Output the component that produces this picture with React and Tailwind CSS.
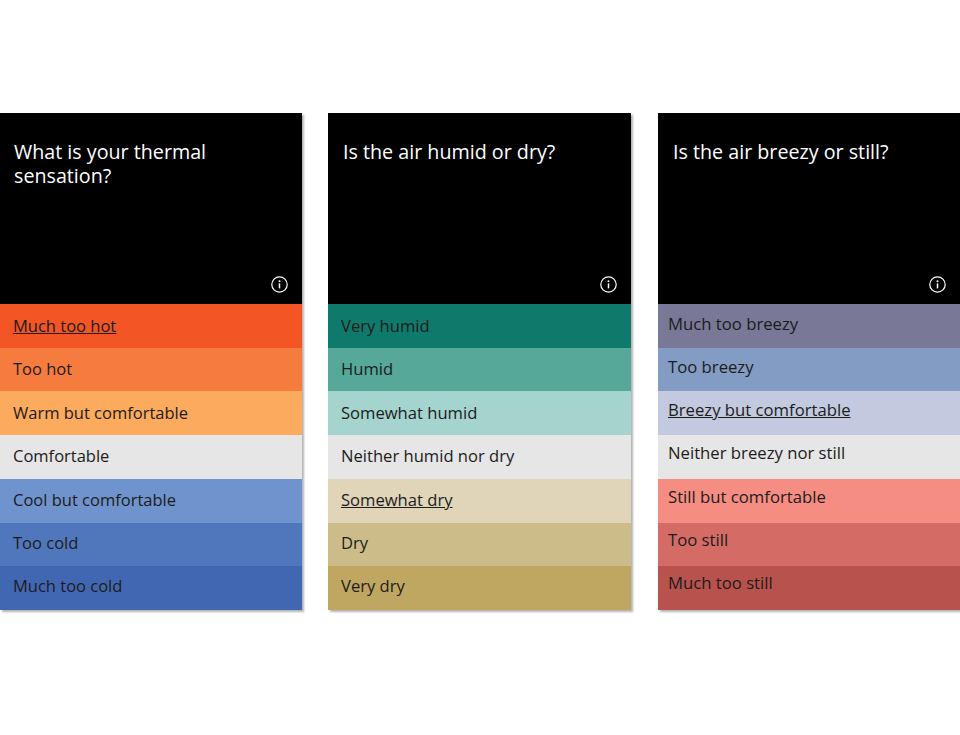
const cards = [
  {
    title: 'What is your thermal sensation?',
    width: 'w-[302px]',
    titlePad: 'pl-[14px]',
    rowPad: 'pl-[13px] text-[16.5px]',
    rows: [
      { label: 'Much too hot', bg: 'bg-[#f35525]', pb: 'pt-[1px]', underline: true },
      { label: 'Too hot', bg: 'bg-[#f57b3f]', pb: 'pb-0' },
      { label: 'Warm but comfortable', bg: 'bg-[#fcaa5e]', pb: 'pb-0' },
      { label: 'Comfortable', bg: 'bg-[#e5e6e5]', pb: 'pb-[2px]' },
      { label: 'Cool but comfortable', bg: 'bg-[#6f93cc]', pb: 'pb-0' },
      { label: 'Too cold', bg: 'bg-[#5077bc]', pb: 'pb-[2px]' },
      { label: 'Much too cold', bg: 'bg-[#4267b2]', pb: 'pb-[4px]' },
    ],
  },
  {
    title: 'Is the air humid or dry?',
    width: 'w-[303px] ml-[26px]',
    titlePad: 'pl-[15px]',
    rowPad: 'pl-[13px] text-[16.6px]',
    rows: [
      { label: 'Very humid', bg: 'bg-[#0f7a6b]', pb: 'pt-[1px]' },
      { label: 'Humid', bg: 'bg-[#56a898]', pb: 'pb-0' },
      { label: 'Somewhat humid', bg: 'bg-[#a5d3cd]', pb: 'pb-0' },
      { label: 'Neither humid nor dry', bg: 'bg-[#e5e6e5]', pb: 'pb-[2px]' },
      { label: 'Somewhat dry', bg: 'bg-[#e0d5b9]', pb: 'pb-0', underline: true },
      { label: 'Dry', bg: 'bg-[#ccbc89]', pb: 'pb-[2px]' },
      { label: 'Very dry', bg: 'bg-[#bfa661]', pb: 'pb-[4px]' },
    ],
  },
  {
    title: 'Is the air breezy or still?',
    width: 'w-[302px] ml-[27px]',
    titlePad: 'pl-[15px]',
    rowPad: 'pl-[10px] text-[16.7px]',
    rows: [
      { label: 'Much too breezy', bg: 'bg-[#797896]', pb: 'pb-[4px]' },
      { label: 'Too breezy', bg: 'bg-[#829cc3]', pb: 'pb-[6px]' },
      { label: 'Breezy but comfortable', bg: 'bg-[#c3cadf]', pb: 'pb-[8px]', underline: true },
      { label: 'Neither breezy nor still', bg: 'bg-[#e5e6e5]', pb: 'pb-[8px]' },
      { label: 'Still but comfortable', bg: 'bg-[#f68d83]', pb: 'pb-[8px]' },
      { label: 'Too still', bg: 'bg-[#d46c65]', pb: 'pb-[10px]' },
      { label: 'Much too still', bg: 'bg-[#b7524d]', pb: 'pb-[12px]' },
    ],
  },
];

const InfoIcon = () => (
  <svg width="17" height="17" viewBox="0 0 17 17" fill="none" stroke="white">
    <circle cx="8.5" cy="8.5" r="7.7" strokeWidth="1.2" />
    <circle cx="8.5" cy="5.2" r="1" fill="white" stroke="none" />
    <path d="M8.5 7.4v5" strokeWidth="1.5" />
  </svg>
);

const Card = ({ card }) => (
  <div className={`${card.width} flex flex-col shadow-[2px_2px_2px_rgba(0,0,0,0.3)]`}>
    <div className="h-[191px] bg-black flex flex-col justify-between">
      <h2 className={`${card.titlePad} pt-[27px] pr-6 text-[19.7px] leading-[24px] font-normal text-white`}>
        {card.title}
      </h2>
      <div className="flex justify-end pr-[14px] pb-[11px]">
        <InfoIcon />
      </div>
    </div>
    <div className="h-[306px] flex flex-col">
      {card.rows.map((row) => (
        <div
          key={row.label}
          className={`flex-1 flex items-center ${card.rowPad} ${row.bg} text-[#1c1c1c]`}
        >
          <span className={`${row.pb} ${row.underline ? 'underline' : ''}`}>{row.label}</span>
        </div>
      ))}
    </div>
  </div>
);

export default function App() {
  return (
    <div className="w-[960px] h-[735px] bg-white pt-[113px] flex items-start font-['Open_Sans',sans-serif]">
      {cards.map((card) => (
        <Card key={card.title} card={card} />
      ))}
    </div>
  );
}
